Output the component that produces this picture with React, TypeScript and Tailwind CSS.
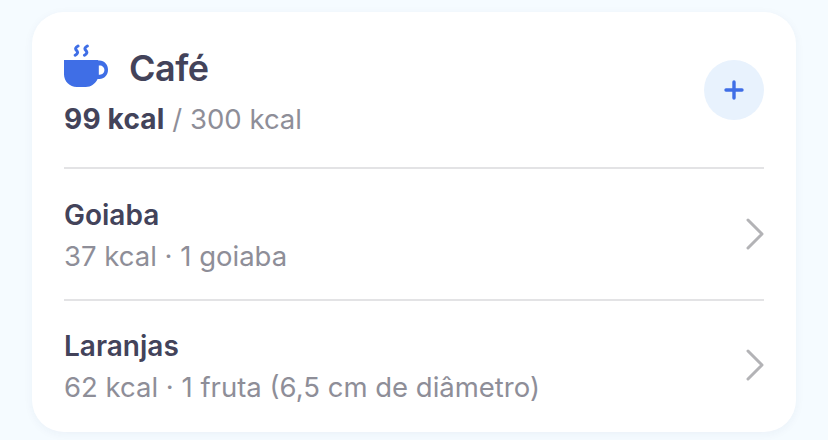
export default function App() {
  const items = [
    { name: "Goiaba", sub: "37 kcal · 1 goiaba" },
    { name: "Laranjas", sub: "62 kcal · 1 fruta (6,5 cm de diâmetro)" },
  ];
  return (
    <div className="w-[828px] h-[440px] overflow-hidden bg-[#f5fbff] pt-3 pl-8 font-['Inter',sans-serif]">
      <div className="w-[764px] h-[420px] rounded-[32px] bg-white shadow-[0_2px_10px_rgba(40,60,110,0.05)] px-8 pt-8 flex flex-col">
        <div className="flex items-start justify-between h-[126px] border-b-2 border-[#e3e3e5]">
          <div className="flex flex-col">
            <div className="flex items-start gap-[21px] h-[44px]">
              <svg width="44" height="44" viewBox="0 0 44 44" className="shrink-0" fill="none">
                <path d="M0 16h34.2v0.6h1.3c4.8 0 8.5 4 8.5 9.2 0 5.2-3.7 9.2-8.5 9.2h-1.9C31.4 39.6 27 43 21.8 43H12.8C5.7 43 0 37.3 0 30.2V16z" fill="#3f6ee6" />
                <path d="M34.8 21.4v9.4h1c2.6 0 4.6-2.1 4.6-4.7s-2-4.7-4.6-4.7h-1z" fill="#ffffff" />
                <path d="M14 2c-2.6 1.4-3 2.8-1.4 4.5 1.6 1.7 1.2 3.2-1.4 4.7M23.3 2c-2.6 1.4-3 2.8-1.4 4.5 1.6 1.7 1.2 3.2-1.4 4.7" stroke="#3f6ee6" strokeWidth="3" strokeLinecap="round" />
              </svg>
              <span className="text-[36px] leading-[48px] font-semibold tracking-[-0.5px] text-[#43435a]">Café</span>
            </div>
            <div className="mt-[15px] text-[27.5px] leading-[32px] text-[#8e8e98]">
              <span className="text-[28px] font-bold tracking-[0.2px] text-[#43435a]">99 kcal</span> / 300 kcal
            </div>
          </div>
          <button className="mt-4 w-[60px] h-[60px] rounded-full bg-[#e8f2fd] flex items-center justify-center">
            <svg width="20" height="20" viewBox="0 0 20 20" fill="none">
              <path d="M10 2v16M2 10h16" stroke="#3f6ee6" strokeWidth="3.4" strokeLinecap="round" />
            </svg>
          </button>
        </div>
        {items.map((it, i) => (
          <div key={it.name} className={`flex items-center justify-between h-[132px] border-b-2 ${i === 0 ? "border-[#e3e3e5]" : "border-transparent"}`}>
            <div className="flex flex-col gap-[9px] mt-[3px]">
              <div className="text-[28px] leading-[32px] font-semibold text-[#43435a]">{it.name}</div>
              <div className="text-[27.5px] leading-[32px] text-[#8e8e98]">{it.sub}</div>
            </div>
            <svg width="18" height="32" viewBox="0 0 18 32" fill="none">
              <path d="M2 2l14 14L2 30" stroke="#b3b3b6" strokeWidth="3" strokeLinecap="round" strokeLinejoin="round" />
            </svg>
          </div>
        ))}
      </div>
    </div>
  );
}
